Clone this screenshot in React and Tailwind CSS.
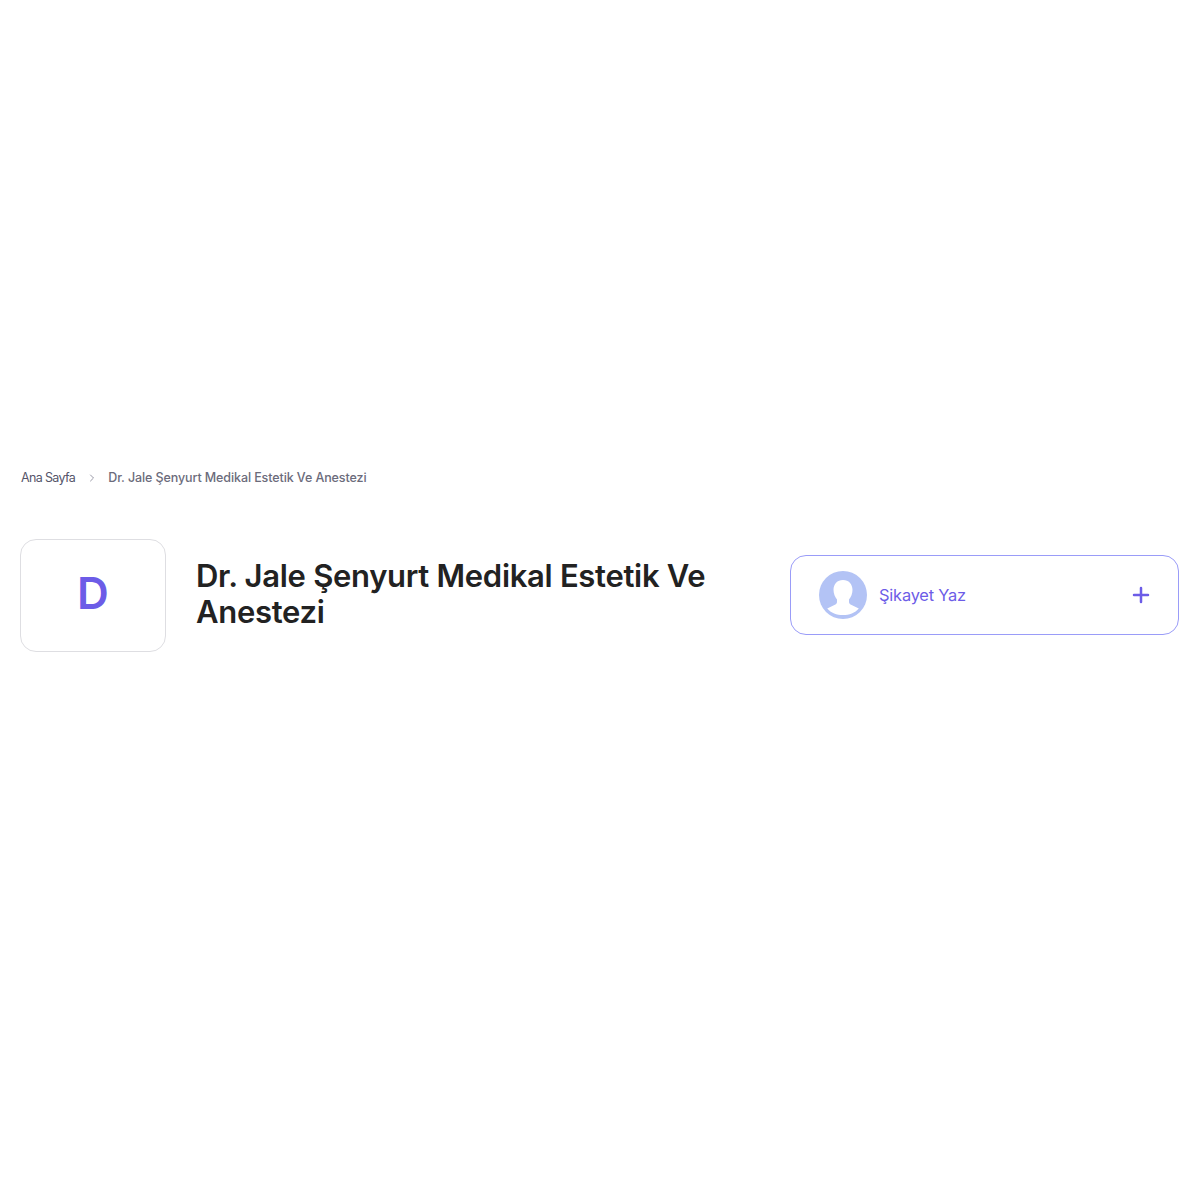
import React from 'react';
import { ChevronRight, Plus } from 'lucide-react';

const Avatar = () => (
  <svg viewBox="0 0 48 48" className="w-12 h-12 shrink-0">
    <circle cx="24" cy="24" r="24" fill="#b3c3f5" />
    <path
      d="M24 9c-5.800 0-9.500 4.200-9.500 9.800 0 3.800 1.500 7.400 3.500 9.600v2.600c0 1.500-1 2.300-2.600 3L8.200 37.400C12 42 17.700 44 24 44s12-2 15.800-6.600L32.600 34c-1.600-.7-2.600-1.500-2.600-3v-2.600c2-2.200 3.500-5.800 3.500-9.600C33.500 13.200 29.800 9 24 9z"
      fill="#ffffff"
    />
  </svg>
);

export default function App() {
  return (
    <div className="min-h-[1200px] bg-white pl-5 pr-[21px] pt-[468px] font-['Inter','Liberation_Sans',sans-serif]">
      {/* breadcrumb */}
      <div className="flex items-center h-5">
        <span className="ml-px text-[12.5px] text-[#55556a] tracking-[-0.65px]">Ana Sayfa</span>
        <ChevronRight className="w-3 h-3 ml-[11px] mr-[10px] text-[#77778a]" strokeWidth={1.5} />
        <span className="text-[12.5px] text-[#6b6b7b] font-medium tracking-[-0.1px]">Dr. Jale Şenyurt Medikal Estetik Ve Anestezi</span>
      </div>

      {/* header */}
      <div className="flex items-center mt-[51px]">
        <div className="w-[146px] h-[113px] shrink-0 rounded-2xl border border-[#dedee2] flex items-center justify-center">
          <span className="text-[44px] leading-none font-semibold text-[#6c5ce7] pb-[6px]">D</span>
        </div>
        <h1 className="w-[560px] ml-[30px] mb-1 text-[31px] leading-[36px] font-semibold text-[#222222] tracking-[-0.3px]">
          Dr. Jale Şenyurt Medikal Estetik Ve Anestezi
        </h1>
        <div className="ml-auto mb-px w-[389px] h-[80px] rounded-2xl border border-[#9a9cf8] flex items-center pl-[28px] pr-[25px]">
          <Avatar />
          <span className="ml-3 text-[16.4px] text-[#6c5ce7] tracking-[-0.2px]">Şikayet Yaz</span>
          <Plus className="ml-auto w-6 h-6 text-[#6c5ce7]" strokeWidth={2.5} />
        </div>
      </div>
    </div>
  );
}
